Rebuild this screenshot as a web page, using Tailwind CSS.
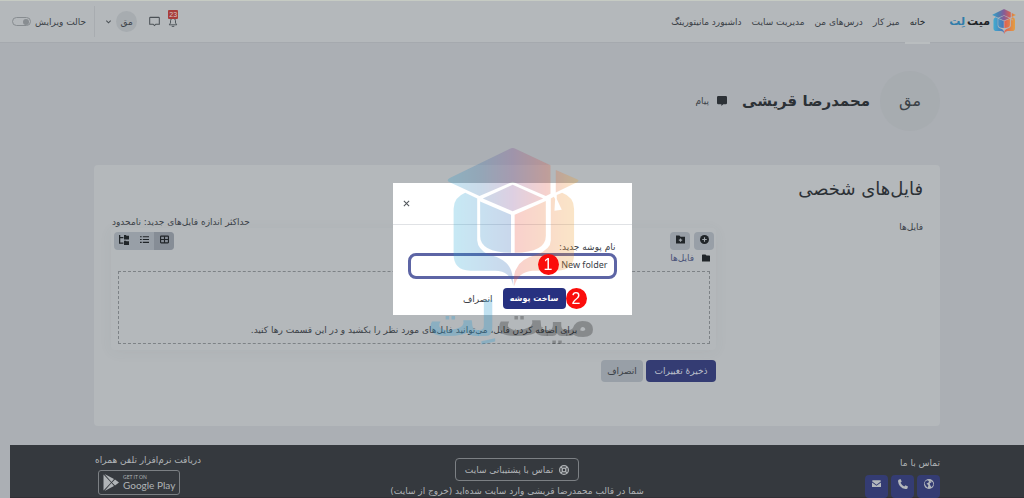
<!DOCTYPE html>
<html lang="fa" dir="rtl">
<head>
<meta charset="utf-8">
<meta name="viewport" content="width=device-width, initial-scale=1">
<title>فایل‌های شخصی</title>
<script src="https://cdn.jsdelivr.net/npm/@tailwindcss/browser@4"></script>
</head>
<body class="min-h-screen overflow-hidden bg-[#abafb4] font-['DejaVu_Sans',sans-serif] text-[9px] leading-3 text-[#3b4147]">

<svg class="absolute size-0" aria-hidden="true">
  <defs>
    <linearGradient id="cap" gradientUnits="userSpaceOnUse" x1="197" y1="0" x2="597" y2="0">
      <stop offset="0" stop-color="#1d9fd0"/><stop offset=".25" stop-color="#3173ae"/><stop offset=".5" stop-color="#7b458e"/><stop offset=".75" stop-color="#db4c3e"/><stop offset="1" stop-color="#f3a51c"/>
    </linearGradient>
    <linearGradient id="cold" gradientUnits="userSpaceOnUse" x1="220" y1="0" x2="398" y2="0">
      <stop offset="0" stop-color="#25a9d6"/><stop offset="1" stop-color="#2e63b4"/>
    </linearGradient>
    <linearGradient id="warm" gradientUnits="userSpaceOnUse" x1="398" y1="0" x2="583" y2="0">
      <stop offset="0" stop-color="#e8473a"/><stop offset="1" stop-color="#ee9a26"/>
    </linearGradient>
    <symbol id="cube" viewBox="195 15 405 422">
      <path fill="url(#cap)" d="M390 20q8-4 16 0l106 50v86l-14 7-100-43-100 43-88-41q-16-7 0-14zM528 84l64 28q9 4 0 9l-64 31z"/>
      <path fill="url(#cap)" d="M398 129l92 41-92 39-90-39z"/>
      <path fill="url(#cold)" d="M300 179l93 40v115q-93-2-93-51z"/>
      <path fill="url(#warm)" d="M404 219l94-41v105q0 49-94 51z"/>
      <path fill="url(#cold)" d="M255 153l36 17v126q2 28 34 43 55 13 68 47 7 20 7 49-8-46-55-47h-75q-50-2-50-49V201q0-34 35-48z"/>
      <path fill="url(#warm)" d="M547 153q36 13 36 48v138q0 47-50 49h-75q-45 4-55 47-4-42 8-56 12-27 60-40 42-16 42-43V170l9-5 4 7-2 35 22-3-15-32v-12z"/>
    </symbol>
  </defs>
</svg>

<header class="flex h-[43px] items-center justify-between border-t border-b border-t-[#c6cbc3] border-b-[#a5a9ae] bg-[#b4b8bb] pr-2 pl-3">
  <div class="flex h-full items-center gap-6">
    <a href="#" class="flex items-center gap-[2px] text-[11px] font-bold leading-6 whitespace-nowrap" aria-label="میت لت">
      <svg class="h-[25px] w-6 opacity-80"><use href="#cube"/></svg>
      <span class="text-[#202428]">میت</span><span class="text-[#2f7daa]">لِت</span>
    </a>
    <nav class="flex h-full items-center gap-[10px] whitespace-nowrap">
      <a href="#" class="-mx-[5px] -mb-[2px] flex h-[43px] items-center border-b-2 border-[#b9bdbf] px-[5px] text-[#23282c]">خانه</a>
      <a href="#">میز کار</a>
      <a href="#">درس‌های من</a>
      <a href="#">مدیریت سایت</a>
      <a href="#">داشبورد مانیتورینگ</a>
    </nav>
  </div>
  <div class="flex items-center gap-2 whitespace-nowrap">
    <button class="relative" aria-label="اطلاعیه‌ها">
      <svg class="size-[10px]" viewBox="0 0 16 16" fill="none" stroke="#4b5156" stroke-width="1.5"><path d="M2 12.500h12l-2-3V6a4 4 0 0 0-8 0v3.500zM6 15h4"/></svg>
      <span class="absolute -top-[7px] right-0 rounded-[1px] bg-[#a93d3a] px-[1px] font-['Liberation_Sans',sans-serif] text-[7px] leading-[9px] text-[#d6c4c4]">23</span>
    </button>
    <button class="ml-1" aria-label="پیام‌ها">
      <svg class="size-[11px]" viewBox="0 0 16 16" fill="none" stroke="#4b5156" stroke-width="1.500"><path d="M2 2h12a1 1 0 0 1 1 1v9H10l-2 2-2-2H1V3a1 1 0 0 1 1-1z"/></svg>
    </button>
    <button class="flex items-center gap-1" aria-label="منوی کاربر">
      <span class="flex size-[21px] items-center justify-center rounded-full bg-[#a7acb0]">مق</span>
      <svg class="size-[7px]" viewBox="0 0 8 8" fill="none" stroke="#4b5156" stroke-width="1.200"><path d="M1.500 3L4 5.500 6.500 3"/></svg>
    </button>
    <label class="mr-[2px] flex h-[31px] items-center gap-1 border-r border-[#a8acb0] pr-2">حالت ویرایش
      <input type="checkbox" class="peer sr-only">
      <span class="flex h-[9px] w-[19px] items-center rounded-full border border-[#878c90] px-px"><span class="size-[6px] rounded-full bg-[#888d91]"></span></span>
    </label>
  </div>
</header>

<div class="ml-[10px]">
  <main class="mx-auto max-w-[846px]">
    <div class="flex items-center pt-7">
      <div class="flex size-[60px] items-center justify-center rounded-full bg-[#a7acb0] text-[16px] leading-6">مق</div>
      <h1 class="mr-[10px] text-[15px] font-bold leading-7 text-[#2c3136]">محمدرضا قریشی</h1>
      <a href="#" class="mr-[15px] flex items-center gap-2">
        <svg class="size-[10px]" viewBox="0 0 16 16" fill="#2c3136"><path d="M2 0h12q2 0 2 2v9q0 2-2 2h-4l-3 3v-3H2q-2 0-2-2V2q0-2 2-2z"/></svg>
        پیام</a>
    </div>

    <section class="mt-[34px] rounded bg-[#b4b8bb] px-[17px] pt-2 pb-11">
      <h2 class="text-[18px] leading-8 text-[#2c3136]">فایل‌های شخصی</h2>
      <form>
        <div class="mt-2 flex justify-between">
          <span class="pt-2">فایل‌ها</span>
          <div class="w-[605px]">
            <p class="mt-[3px] pl-px text-left">حداکثر اندازه فایل‌های جدید: نامحدود</p>
            <div class="rounded-sm pt-1 pr-[2px] pb-[6px] pl-[3px] shadow-[0_2px_14px_rgba(90,100,110,0.06)]">
              <div class="flex justify-between">
                <div class="flex gap-1">
                  <button type="button" aria-label="افزودن" class="flex h-[18px] w-5 items-start justify-center rounded bg-[#989fa7] pt-[3px]"><svg class="size-[9px]" viewBox="0 0 16 16"><circle cx="8" cy="8" r="8" fill="#202529"/><path d="M8 4v8M4 8h8" stroke="#a0a6ac" stroke-width="2"/></svg></button>
                  <button type="button" aria-label="ایجاد پوشه" class="flex h-[18px] w-5 items-start justify-center rounded bg-[#989fa7] pt-[3px]"><svg class="size-[9px]" viewBox="0 0 16 16"><path d="M0 1h6l2 2h8v12H0z" fill="#202529"/><path d="M8 6v6M5 9h6" stroke="#a0a6ac" stroke-width="2"/></svg></button>
                </div>
                <div class="flex overflow-hidden rounded bg-[#989fa7]">
                  <button type="button" aria-label="نمایش شبکه‌ای" class="flex h-[18px] w-5 items-start justify-center bg-[#868d96] pt-[3px]"><svg class="size-[9px]" viewBox="0 0 16 16" fill="none" stroke="#202529" stroke-width="2"><rect x="1" y="2" width="14" height="12" rx="1"/><path d="M8 2v12M1 8h14"/></svg></button>
                  <button type="button" aria-label="نمایش فهرستی" class="flex h-[18px] w-5 items-start justify-center pt-[3px]"><svg class="size-[9px]" viewBox="0 0 16 16" stroke="#202529" stroke-width="2"><path d="M0 3h3M5 3h11M0 8h3M5 8h11M0 13h3M5 13h11"/></svg></button>
                  <button type="button" aria-label="نمایش درختی" class="flex h-[18px] w-5 items-start justify-center pt-[3px]"><svg class="size-[10px]" viewBox="0 0 16 16" fill="#202529"><path d="M8 0h3l1 1h4v6H8zM8 9h3l1 1h4v6H8zM0 0h2v3h5v2H2v7h5v2H0z"/></svg></button>
                </div>
              </div>
              <div class="mt-[2px] flex items-center gap-2 pr-1">
                <svg class="size-2" viewBox="0 0 16 16" fill="#202529"><path d="M1 1h6l2 2h6l1 1v11H0V2z"/></svg>
                <a href="#" class="text-[#4a5278]">فایل‌ها</a>
              </div>
              <div class="mx-1 mt-[7px] flex h-[73px] items-end justify-center border border-dashed border-[#7d8286] pb-[7px]">
                <p>برای اضافه کردن فایل، می‌توانید فایل‌های مورد نظر را بکشید و در این قسمت رها کنید.</p>
              </div>
            </div>
            <div class="mt-[10px] flex gap-[3px]">
              <button type="button" class="h-[22px] w-[70px] rounded bg-[#343c73] text-[#bcc0cc]">ذخیرهٔ تغییرات</button>
              <button type="button" class="h-[22px] w-[42px] rounded bg-[#989fa7]">انصراف</button>
            </div>
          </div>
        </div>
      </form>
    </section>
  </main>

  <footer class="mt-[19px] h-[53px] border-b border-[#302f35] bg-[#35393e] text-[#b0b4b7]">
    <div class="mx-auto grid max-w-[846px] grid-cols-3">
      <div class="pt-3">
        <p>تماس با ما</p>
        <div class="mt-[6px] flex gap-[3px]">
          <a href="#" aria-label="وب‌سایت" class="flex size-[23px] items-start justify-center rounded bg-[#343c73] pt-1"><svg class="size-[10px]" viewBox="0 0 16 16"><circle cx="8" cy="8" r="8" fill="#b4b8bd"/><path d="M2 4l3-2 3 1-1 3-3 1 3 3-1 4-3-3-2-4zM10 3l4 2 1 4-3 4-2-3-1-3 3-2z" fill="#343c73"/></svg></a>
          <a href="#" aria-label="تلفن" class="flex size-[23px] items-start justify-center rounded bg-[#343c73] pt-1"><svg class="size-[10px]" viewBox="0 0 16 16" fill="#b4b8bd"><path d="M1 1l3-1 2 4-2 2q2 4 6 6l2-2 4 2-1 3q-1 1-3 1Q1 14 0 3q0-1 1-2z"/></svg></a>
          <a href="#" aria-label="ایمیل" class="flex size-[23px] items-start justify-center rounded bg-[#343c73] pt-1"><svg class="size-[9px]" viewBox="0 0 16 16" fill="#b4b8bd"><path d="M1 2h14l1 2-8 6-8-6zM0 6l8 6 8-6v8H0z"/></svg></a>
        </div>
      </div>
      <div class="flex flex-col items-center whitespace-nowrap pt-[13px]">
        <a href="#" class="flex h-[23px] w-[124px] items-center justify-center gap-[6px] rounded border border-[#7c8084]">
          <svg class="size-[10px]" viewBox="0 0 16 16" fill="none" stroke="#b0b4b7" stroke-width="2"><circle cx="8" cy="8" r="7"/><circle cx="8" cy="8" r="3"/><path d="M3 3l3 3M13 3l-3 3M3 13l3-3M13 13l-3-3"/></svg>
          تماس با پشتیبانی سایت</a>
        <p class="mt-1">شما در قالب محمدرضا قریشی وارد سایت شده‌اید (<a href="#">خروج از سایت</a>)</p>
      </div>
      <div class="flex flex-col items-end pt-[9px] pl-px">
        <p>دریافت نرم‌افزار تلفن همراه</p>
        <a href="#" dir="ltr" class="mt-1 mr-auto ml-[3px] flex h-[25px] w-[82px] items-center gap-1 self-end rounded-[3px] border border-[#7c8084] pl-1">
          <svg class="h-[17px] w-4 shrink-0" viewBox="0 0 32 34" fill="#b0b4b7"><path d="M1 1v32l15-16zM3 0l14 16 5-6zM3 34l14-16 5 6zM24 11l-6 6 6 6 8-6z"/></svg>
          <span class="flex flex-col font-['Lato',sans-serif] whitespace-nowrap"><span class="text-[5px] leading-[6px]">GET IT ON</span><span class="text-[10px] leading-[11px]">Google Play</span></span>
        </a>
      </div>
    </div>
  </footer>
</div>

<!-- New-folder dialog -->
<div class="fixed inset-0 flex items-center justify-center">
  <div role="dialog" aria-label="نام پوشه جدید" class="w-[239px] bg-white">
    <div class="flex h-[42px] items-center justify-end border-b border-[#e0e2e5] pl-[10px]">
      <button aria-label="بستن"><svg class="size-[7px]" viewBox="0 0 8 8" stroke="#50555a" stroke-width="1.200"><path d="M1 1l6 6M7 1L1 7"/></svg></button>
    </div>
    <form class="px-[15px] pt-4 pb-[6px]">
      <label for="folder" class="block px-px">نام پوشه جدید:</label>
      <input id="folder" type="text" value="New folder" class="block h-[26px] w-full rounded-lg border-[3px] border-[#5d65a5] px-[6px] pb-[3px] font-['Noto_Sans',sans-serif] text-[9px] leading-3 outline-none">
      <div class="mt-[9px] flex items-center gap-[10px] pr-[51px]">
        <button type="button" class="h-[21px] w-[63px] rounded bg-[#273180] text-[8px] font-bold text-white">ساخت پوشه</button>
        <button type="button">انصراف</button>
      </div>
    </form>
  </div>
</div>

<!-- Brand watermark laid over the page -->
<div class="pointer-events-none fixed inset-0 flex items-center justify-center" aria-hidden="true">
  <div class="relative h-[204px] w-[163px]">
    <svg class="absolute top-0 left-[14px] h-[140px] w-[135px] opacity-25"><use href="#cube"/></svg>
    <div class="absolute inset-x-0 top-[137px] flex justify-center text-[48px] font-bold leading-[70px] whitespace-nowrap"><span class="text-black/25">میت</span><span class="text-[#2f9bd0]/30">لِت</span></div>
  </div>
</div>

<!-- Numbered step markers -->
<div class="pointer-events-none fixed inset-0 flex items-center justify-center font-['Liberation_Sans',sans-serif] text-[16px] leading-[21px] text-white">
  <div class="relative h-[132px] w-[239px]">
    <span class="absolute top-[71px] left-[145px] size-[21px] rounded-full bg-[#fb0d0b] text-center">1</span>
    <span class="absolute top-[105px] left-[173px] size-[21px] rounded-full bg-[#fb0d0b] text-center">2</span>
  </div>
</div>
</body>
</html>
